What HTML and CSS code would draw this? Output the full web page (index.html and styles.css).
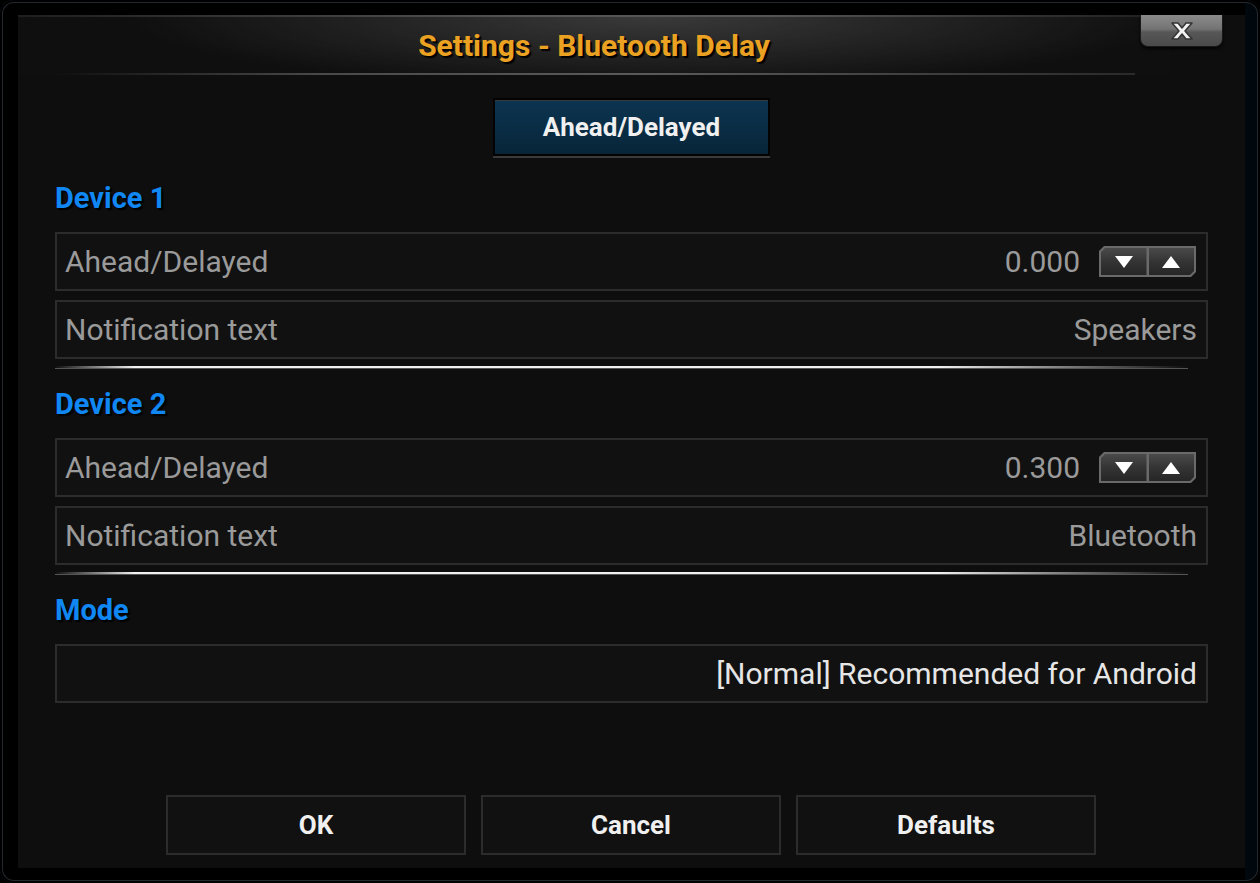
FILE: index.html
```html
<!DOCTYPE html>
<html lang="en">
<head>
    <meta charset="UTF-8">
    <meta name="viewport" content="width=device-width, initial-scale=1.0">
    <title>Settings - Bluetooth Delay</title>
    <link rel="stylesheet" href="styles.css">
</head>
<body>
    <div class="screen">
        <div class="dialog">
            <div class="header">
                <h1 class="title">Settings - Bluetooth Delay</h1>
            </div>
            <button class="close" title="Close">
                <svg width="26" height="20" viewBox="0 0 26 20">
                    <path d="M3 2 L9 2 L13 7 L17 2 L23 2 L16 10 L23 18 L17 18 L13 13 L9 18 L3 18 L10 10 Z" fill="#f2f2f2" stroke="#333" stroke-width="1.5" stroke-linejoin="round"/>
                </svg>
            </button>

            <div class="tabs">
                <div class="tab">Ahead/Delayed</div>
            </div>

            <!-- Device 1 -->
            <div class="section first">
                <h2 class="heading">Device 1</h2>
                <div class="row">
                    <span class="label">Ahead/Delayed</span>
                    <span class="value">0.000</span>
                    <div class="spinner">
                        <span class="spin down"></span>
                        <span class="spin up"></span>
                    </div>
                </div>
                <div class="row">
                    <span class="label">Notification text</span>
                    <span class="value">Speakers</span>
                </div>
            </div>
            <div class="sep"></div>

            <!-- Device 2 -->
            <div class="section">
                <h2 class="heading">Device 2</h2>
                <div class="row">
                    <span class="label">Ahead/Delayed</span>
                    <span class="value">0.300</span>
                    <div class="spinner">
                        <span class="spin down"></span>
                        <span class="spin up"></span>
                    </div>
                </div>
                <div class="row">
                    <span class="label">Notification text</span>
                    <span class="value">Bluetooth</span>
                </div>
            </div>
            <div class="sep"></div>

            <!-- Mode -->
            <div class="section">
                <h2 class="heading">Mode</h2>
                <div class="row">
                    <span class="label"></span>
                    <span class="value bright">[Normal] Recommended for Android</span>
                </div>
            </div>

            <div class="actions">
                <button class="action">OK</button>
                <button class="action">Cancel</button>
                <button class="action">Defaults</button>
            </div>
        </div>
    </div>
</body>
</html>
```

FILE: styles.css
```css
* {
    box-sizing: border-box;
}

html, body {
    margin: 0;
    height: 100%;
    background: #000;
}

body {
    font-family: Roboto, "Liberation Sans", sans-serif;
    overflow: hidden;
}

.screen {
    height: 883px;
    padding: 15px 15px 15px 18px;
    background: linear-gradient(to right, #000 98.8%, #00080e 98.8%);
    border-radius: 14px;
    box-shadow: inset 0 0 0 2px #000, inset 0 0 0 3px #23292e;
}

.dialog {
    position: relative;
    height: 853px;
    background: #0e0e0e;
    padding: 0 37px;
    display: flex;
    flex-direction: column;
}

.header {
    height: 60px;
    margin: 0 38px 0 -37px;
    display: flex;
    align-items: center;
    justify-content: center;
    background:
        radial-gradient(ellipse 520px 70px at 55% 0%, rgba(62, 62, 62, 0.9), rgba(20, 20, 20, 0) 100%),
        #0f0f0f;
    border-top: 2px solid transparent;
    border-image: linear-gradient(to right, #1e1e1e, #555 45%, #555 65%, #1e1e1e) 1;
    position: relative;
}

.header::after {
    content: "";
    position: absolute;
    left: 36px;
    right: 35px;
    bottom: 0;
    height: 2px;
    background: linear-gradient(to right, rgba(90, 90, 90, 0), #4a4a4a 25%, #5a5a5a 55%, #2a2a2a 100%);
}

.title {
    margin: -2px 0 0;
    color: #eba222;
    font-size: 30px;
    font-weight: 700;
    text-shadow: 2px 2px 1px #000;
}

.close {
    position: absolute;
    top: 0;
    right: 22px;
    width: 83px;
    height: 32px;
    border: 1px solid #1a1a1a;
    border-top: none;
    border-radius: 0 0 8px 8px;
    background: linear-gradient(to bottom, #8a8a8a 0%, #747474 45%, #575757 55%, #4a4a4a 100%);
    box-shadow: 0 2px 3px rgba(0, 0, 0, 0.8);
    display: flex;
    justify-content: center;
    align-items: center;
    padding: 0;
}

.tabs {
    display: flex;
    justify-content: center;
    margin-top: 23px;
}

.tab {
    width: 277px;
    height: 58px;
    display: flex;
    align-items: center;
    justify-content: center;
    color: #f0f0f0;
    font-size: 26px;
    font-weight: 700;
    background: linear-gradient(to bottom, #0c3450, #0a2d45 50%, #082538);
    border: 2px solid #030303;
    box-shadow: inset 0 1px 0 #3a3a3a, 0 2px 0 #3a3a3a;
}

.section {
    display: flex;
    flex-direction: column;
    gap: 9px;
    margin-top: 18px;
}

.section.first {
    margin-top: 25px;
}

.heading {
    margin: 0 0 8px;
    height: 34px;
    line-height: 34px;
    color: #1087f2;
    font-size: 29px;
    font-weight: 700;
    text-shadow: 2px 2px 1px #000;
}

.row {
    height: 59px;
    display: flex;
    align-items: center;
    padding: 0 9px 0 8px;
    background: #111;
    border: 2px solid #2c2c2c;
}

.label {
    flex: 1;
    color: #9a9a9a;
    font-size: 30px;
}

.value {
    color: #9a9a9a;
    font-size: 30px;
}

.value.bright {
    color: #e6e6e6;
}

.spinner {
    display: flex;
    margin-left: 19px;
    margin-right: 1px;
    width: 97px;
    height: 31px;
    padding: 2px;
    background: #6a6a6a;
    clip-path: polygon(5px 0, 100% 0, 100% calc(100% - 5px), calc(100% - 5px) 100%, 0 100%, 0 5px);
    gap: 2px;
}

.spin {
    flex: 1;
    display: flex;
    align-items: center;
    justify-content: center;
    background: linear-gradient(to bottom, #4a4a4a, #343434 50%, #262626);
}

.spin.down {
    clip-path: polygon(4px 0, 100% 0, 100% 100%, 0 100%, 0 4px);
}

.spin.up {
    clip-path: polygon(0 0, 100% 0, 100% calc(100% - 4px), calc(100% - 4px) 100%, 0 100%);
}

.spin::before {
    content: "";
    width: 0;
    height: 0;
    border-left: 9px solid transparent;
    border-right: 9px solid transparent;
}

.spin.down::before {
    border-top: 12px solid #fff;
}

.spin.up::before {
    border-bottom: 12px solid #fff;
}

.sep {
    height: 3px;
    margin-top: 7px;
    margin-right: 20px;
    background: linear-gradient(to right, rgba(255, 255, 255, 0), #f0f0f0 7%, #f0f0f0 78%, rgba(255, 255, 255, 0) 100%);
    border-bottom: 1px solid #555;
}

.actions {
    margin-top: auto;
    margin-bottom: 13px;
    margin-right: 1px;
    display: flex;
    justify-content: center;
    gap: 15px;
}

.action {
    width: 300px;
    height: 60px;
    background: #111;
    border: 2px solid #2c2c2c;
    color: #f0f0f0;
    font-family: Roboto, "Liberation Sans", sans-serif;
    font-size: 26px;
    font-weight: 700;
    padding: 0;
}
```
